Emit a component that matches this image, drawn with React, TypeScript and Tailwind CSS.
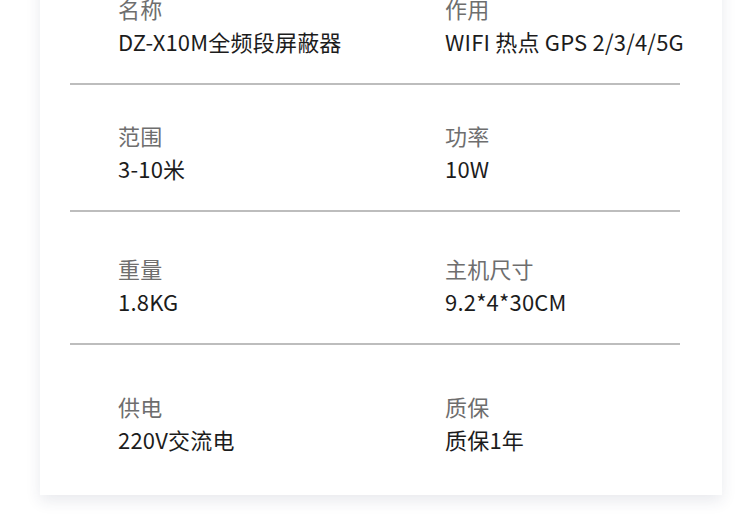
const rows = [
  { pt: "pt-[34px]", pb: "pb-[25px]", a: ["名称", "DZ-X10M全频段屏蔽器"], b: ["作用", "WIFI 热点 GPS 2/3/4/5G"] },
  { pt: "pt-[34px]", pb: "pb-[25px]", a: ["范围", "3-10米"], b: ["功率", "10W"] },
  { pt: "pt-[40px]", pb: "pb-[25px]", a: ["重量", "1.8KG"], b: ["主机尺寸", "9.2*4*30CM"] },
  { pt: "pt-[45px]", pb: "pb-[39px]", a: ["供电", "220V交流电"], b: ["质保", "质保1年"] },
];

function Cell({ label, value }: { label: string; value: string }) {
  return (
    <div className="flex flex-col tracking-[0.2px]">
      <span className="text-[22px] leading-[33px] text-[#6e6e6e] whitespace-nowrap">{label}</span>
      <span className="text-[22px] leading-[33px] text-[#1c1c1c] whitespace-nowrap">{value}</span>
    </div>
  );
}

export default function App() {
  return (
    <div
      className="w-[750px] h-[521px] overflow-hidden bg-white"
      style={{ fontFamily: '"Noto Sans CJK SC", "Noto Sans", sans-serif' }}
    >
      <div className="ml-[40px] -mt-[42px] w-[682px] bg-white shadow-[0_6px_14px_rgba(40,50,90,0.1)]">
        {rows.map((r, i) => (
          <div key={i}>
            {i > 0 && <div className="ml-[30px] mr-[42px] h-[2px] bg-[#bdbdbd]" />}
            <div className={`grid grid-cols-[327px_1fr] pl-[78px] ${r.pt} ${r.pb}`}>
              <Cell label={r.a[0]} value={r.a[1]} />
              <Cell label={r.b[0]} value={r.b[1]} />
            </div>
          </div>
        ))}
      </div>
    </div>
  );
}
